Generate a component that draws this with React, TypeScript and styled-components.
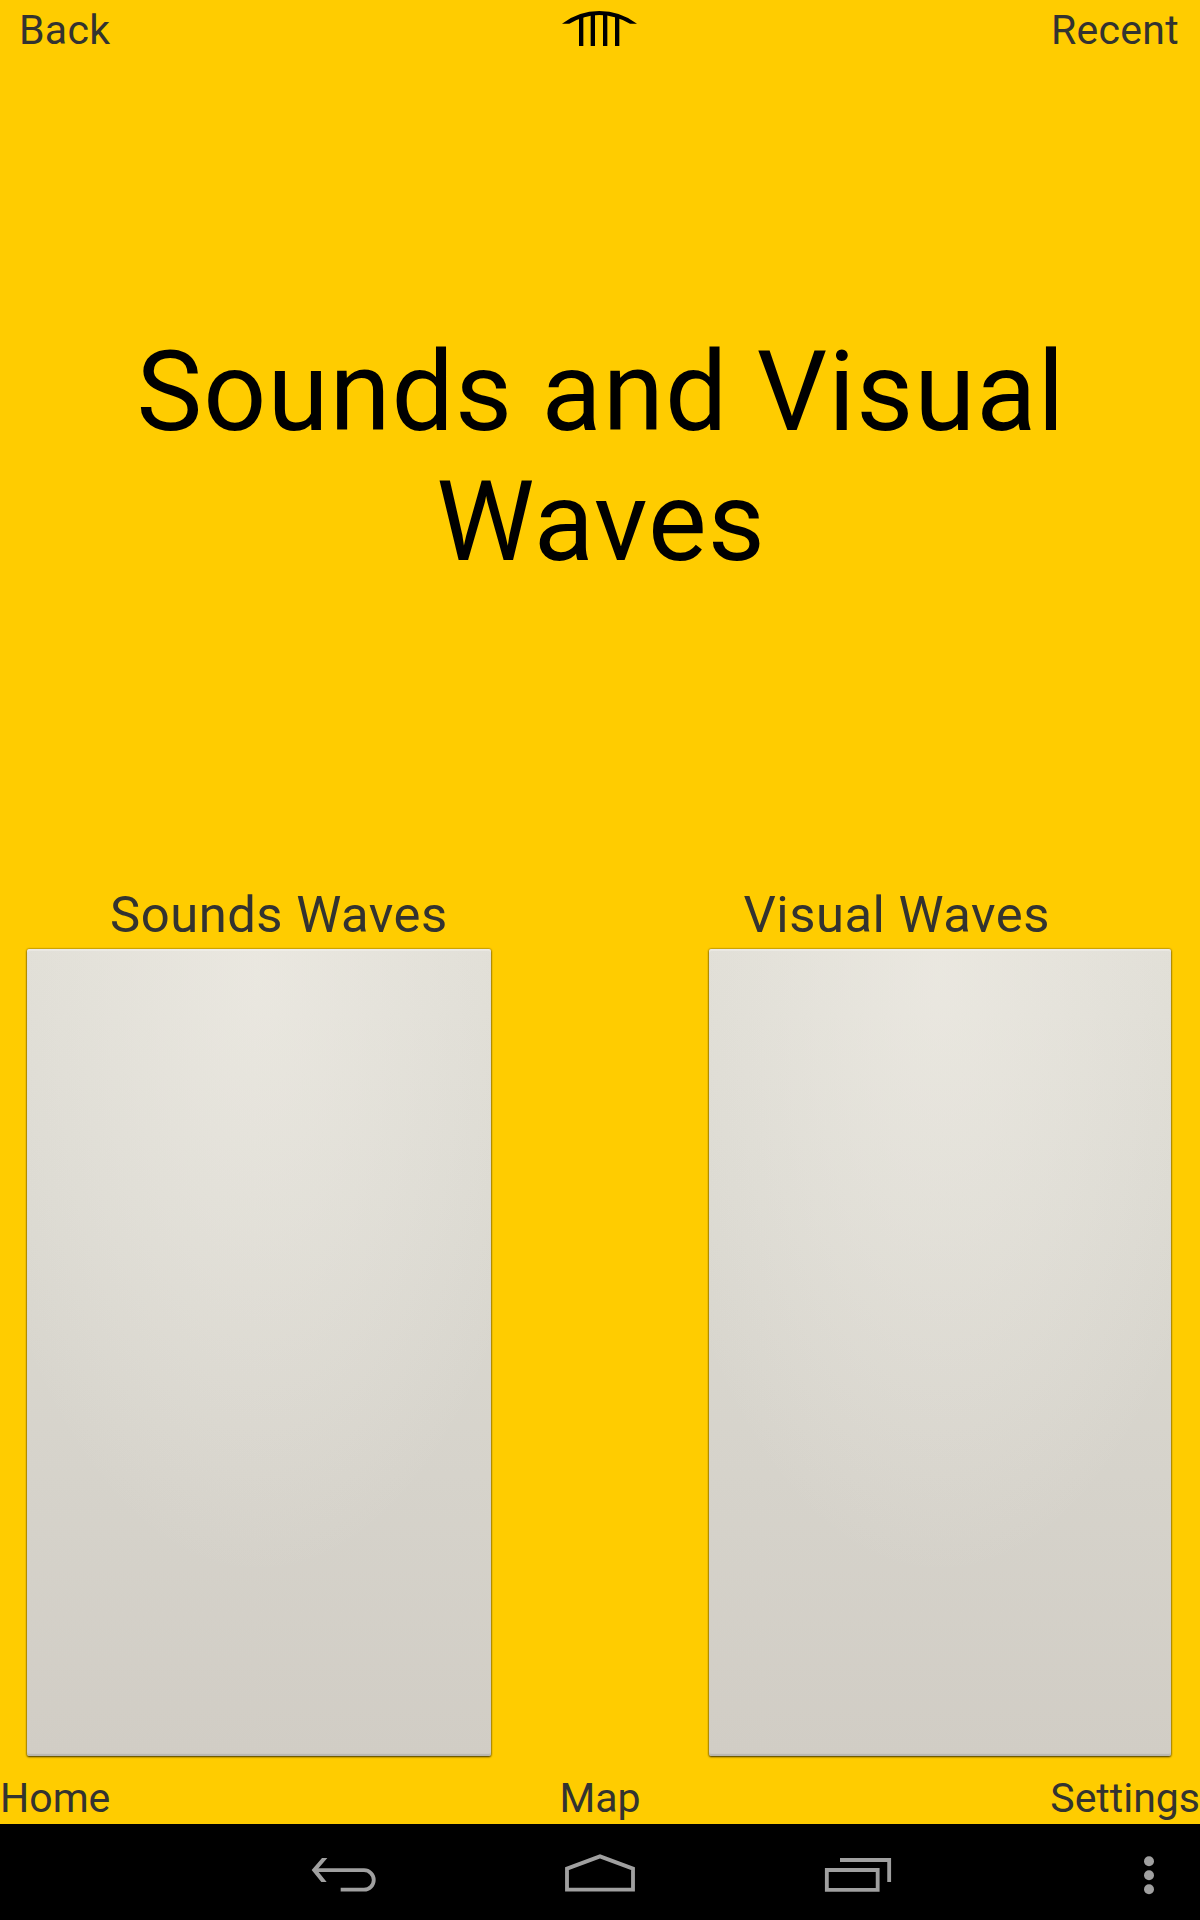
import React from "react";
import styled, { createGlobalStyle } from "styled-components";

const GlobalStyle = createGlobalStyle`
  body { margin: 0; background: #ffcc00; }
  * { box-sizing: border-box; }
`;

const Screen = styled.div`
  width: 1200px;
  height: 1920px;
  display: flex;
  flex-direction: column;
  overflow: hidden;
  background: #ffcc00;
  color: #333330;
  font-family: Roboto, "Liberation Sans", sans-serif;
`;

const Bar = styled.div<{ $height: number; $inset?: string }>`
  display: grid;
  grid-template-columns: 1fr auto 1fr;
  height: ${(p) => p.$height}px;
  padding: ${(p) => p.$inset ?? "0"};
`;

const BarButton = styled.button<{ $align?: string; $spacing?: number }>`
  border: 0;
  padding: 0;
  background: none;
  color: inherit;
  font: 400 41px/48px Roboto, sans-serif;
  letter-spacing: ${(p) => p.$spacing ?? 0}px;
  text-align: left;
  white-space: nowrap;
  align-self: start;
  justify-self: ${(p) => p.$align ?? "start"};
`;

const LogoSlot = styled.div`
  margin: -6px 0 0 2px;
  width: 120px;
  height: 60px;
`;

const Title = styled.h1`
  margin: 0;
  padding: 267px 0 0 2px;
  height: 825px;
  color: #000;
  font-weight: 400;
  font-size: 110.7px;
  line-height: 130px;
  letter-spacing: 1px;
  text-align: center;
`;

const Choices = styled.main`
  display: flex;
  justify-content: space-between;
  height: 889px;
  padding: 0 29px 0 27px;
`;

const Choice = styled.section<{ $width: number }>`
  width: ${(p) => p.$width}px;
`;

const Label = styled.h2<{ $indent: number }>`
  margin: 0;
  height: 64px;
  padding-left: ${(p) => p.$indent}px;
  font-weight: 400;
  font-size: 50.8px;
  line-height: 59px;
  letter-spacing: 0.5px;
  white-space: nowrap;
`;

const Tile = styled.button`
  display: block;
  width: 100%;
  height: 807px;
  border: 0;
  border-radius: 2px;
  background:
    radial-gradient(ellipse 65% 75% at 50% 3%, rgba(242, 239, 232, 0.58), rgba(224, 222, 214, 0) 100%),
    linear-gradient(#dfddd5 0%, #dbd9d1 30%, #d6d3cb 65%, #d1cdc5 100%);
  box-shadow:
    inset 0 2px 1px rgba(255, 255, 255, 0.3),
    inset 0 -2px 1px rgba(150, 150, 145, 0.4),
    0 0 2px rgba(70, 55, 0, 0.85),
    0 1px 2px rgba(50, 40, 0, 0.85);
`;

const NavBar = styled.nav`
  display: flex;
  height: 96px;
  padding: 16px 0 0 300px;
  background: #000;
`;

const NavIcon = styled.svg<{ $gap?: number }>`
  flex: none;
  margin-left: ${(p) => p.$gap ?? 0}px;
  fill: none;
  stroke: #a0a0a0;
  stroke-width: 11.5;
`;

const Logo = () => (
  <svg width="120" height="60" viewBox="0 0 360 180">
    <path d="M66 71Q116 33 178 33Q240 33 291 71H270Q224 45 178 45Q134 45 88 71Z" />
    <path d="M123.5 50V138M158.5 44V138M195.5 44V138M231.5 50V138" stroke="#000" strokeWidth="13" />
  </svg>
);

export default function App() {
  return (
    <Screen>
      <GlobalStyle />
      <Bar $height={60} $inset="6px 21px 0 19px">
        <BarButton $spacing={0.3}>Back</BarButton>
        <LogoSlot><Logo /></LogoSlot>
        <BarButton $align="end" $spacing={0.3}>Recent</BarButton>
      </Bar>
      <Title>Sounds and Visual<br />Waves</Title>
      <Choices>
        <Choice $width={464}>
          <Label $indent={83}>Sounds Waves</Label>
          <Tile aria-label="Sounds Waves" />
        </Choice>
        <Choice $width={462}>
          <Label $indent={34.5}>Visual Waves</Label>
          <Tile aria-label="Visual Waves" />
        </Choice>
      </Choices>
      <Bar $height={50}>
        <BarButton>Home</BarButton>
        <BarButton>Map</BarButton>
        <BarButton $align="end">Settings</BarButton>
      </Bar>
      <NavBar>
        <NavIcon width="100" height="70" viewBox="0 0 300 210">
          <path d="M48 90.5H192A29.2 29.2 0 0 1 192 149H122" />
          <path d="M66 54H82L51 90L80 126H64L35 90Z" fill="#a0a0a0" stroke="none" />
        </NavIcon>
        <NavIcon $gap={150} width="100" height="70" viewBox="0 0 300 210">
          <path d="M51 149V86L150 49L249 86V149Z" />
        </NavIcon>
        <NavIcon $gap={160} width="100" height="70" viewBox="0 0 300 210">
          <path d="M50.5 90H203V149.5H50.5ZM90 60H237.5V126" />
        </NavIcon>
        <NavIcon $gap={210} width="80" height="80" viewBox="0 0 240 240">
          <g fill="#a0a0a0" stroke="none">
            <circle cx="87" cy="64" r="15" />
            <circle cx="87" cy="106" r="15" />
            <circle cx="87" cy="148" r="15" />
          </g>
        </NavIcon>
      </NavBar>
    </Screen>
  );
}
